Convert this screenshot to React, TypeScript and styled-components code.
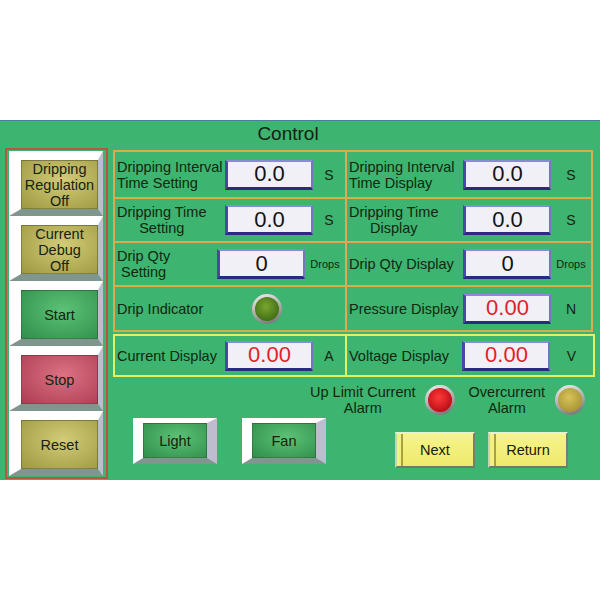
import React from 'react';
import styled, { createGlobalStyle, css } from 'styled-components';

type Tone = 'olive' | 'green' | 'red';
type LedColor = 'green' | 'red' | 'amber';

const GlobalStyle = createGlobalStyle`
  html, body {
    margin: 0;
    padding: 0;
    background: #ffffff;
  }
  body {
    font-family: 'Liberation Sans', Arial, sans-serif;
    color: #10280f;
  }
`;

const Page = styled.div`
  width: 600px;
  height: 600px;
  padding-top: 120px;
  box-sizing: border-box;
`;

const Panel = styled.div`
  width: 600px;
  height: 360px;
  background: #3db46f;
  border-top: 1px solid #4a7f9a;
  box-sizing: border-box;
  display: flex;
  flex-direction: column;
`;

const Title = styled.div`
  height: 27px;
  line-height: 25px;
  font-size: 19px;
  text-align: center;
  padding-right: 24px;
  color: #141f14;
`;

const Body = styled.div`
  display: flex;
  gap: 5px;
  padding-left: 5px;
`;

const SideColumn = styled.div`
  width: 103px;
  height: 331px;
  box-sizing: border-box;
  border: 2px solid #b8573f;
  padding: 1px 2px;
  display: flex;
  flex-direction: column;
`;

const BevelCell = styled.div<{ $small?: boolean }>`
  box-sizing: border-box;
  display: flex;
  flex-shrink: 0;
  background: #ffffff;
  border-style: solid;
  border-color: #ffffff #bdbdcf #7f968f #ffffff;
  ${({ $small }) =>
    $small
      ? css`
          width: 84px;
          height: 46px;
          border-width: 5px 10px 6px 10px;
        `
      : css`
          width: 94px;
          height: 65px;
          border-width: 9px 5px 7px 12px;
        `}
`;

const faceColors: Record<Tone, [string, string]> = {
  olive: ['#d2cc78', '#9e9842'],
  green: ['#5cc276', '#2f8e4b'],
  red: ['#dc7284', '#ad3c52'],
};

const Face = styled.div<{ $tone: Tone }>`
  flex: 1;
  box-sizing: border-box;
  border: 1px solid rgba(40, 50, 30, 0.35);
  background: radial-gradient(
    ellipse at 55% 40%,
    ${({ $tone }) => faceColors[$tone][0]} 0%,
    ${({ $tone }) => faceColors[$tone][1]} 100%
  );
  display: flex;
  align-items: center;
  justify-content: center;
  text-align: center;
  font-size: 14.5px;
  line-height: 16px;
  color: #17220f;
`;

const Main = styled.div`
  width: 482px;
  padding-top: 2px;
  display: flex;
  flex-direction: column;
`;

const FieldGrid = styled.div`
  width: 480px;
  box-sizing: border-box;
  display: grid;
  grid-template-columns: 230px 244px;
  grid-template-rows: 45px 42px 42px 43px;
  gap: 2px;
  padding: 2px;
  background: #dcab4c;
`;

const Cell = styled.div`
  background: #3db46f;
  display: flex;
  align-items: center;
  padding-left: 2px;
`;

const Label = styled.div<{ $width: number; $center?: boolean }>`
  width: ${({ $width }) => $width}px;
  flex-shrink: 0;
  font-size: 14.5px;
  line-height: 16px;
  white-space: nowrap;
  display: flex;
  justify-content: flex-start;
  span {
    display: inline-block;
    text-align: ${({ $center }) => ($center ? 'center' : 'left')};
  }
`;

const ValueBox = styled.div<{ $red?: boolean }>`
  width: 88px;
  height: 30px;
  flex-shrink: 0;
  box-sizing: border-box;
  background: #f1f0f6;
  border-style: solid;
  border-width: 2px 2px 3px 3px;
  border-color: #8a8ad6 #7676bf #2b2b7c #4848a6;
  display: flex;
  align-items: center;
  justify-content: center;
  font-size: 22px;
  color: ${({ $red }) => ($red ? '#e11f2b' : '#121212')};
`;

const Unit = styled.div<{ $small?: boolean }>`
  flex: 1;
  text-align: center;
  font-size: ${({ $small }) => ($small ? 11 : 14)}px;
  color: #15250f;
`;

const ledColors: Record<LedColor, [string, string]> = {
  green: ['#7aa52e', '#2f5f0e'],
  red: ['#ff3a3a', '#a8000c'],
  amber: ['#d8c25a', '#9c8a2a'],
};

const Led = styled.div<{ $color: LedColor; $gap?: number }>`
  width: 30px;
  height: 30px;
  flex-shrink: 0;
  margin-left: ${({ $gap }) => $gap ?? 0}px;
  border-radius: 50%;
  box-sizing: border-box;
  padding: 3px;
  background: linear-gradient(160deg, #f2f2f2 0%, #a8a8a8 55%, #6a6a6a 100%);
  &::after {
    content: '';
    display: block;
    width: 100%;
    height: 100%;
    border-radius: 50%;
    background: radial-gradient(
      circle at 45% 40%,
      ${({ $color }) => ledColors[$color][0]} 0%,
      ${({ $color }) => ledColors[$color][1]} 95%
    );
  }
`;

const YellowRow = styled.div`
  margin-top: 2px;
  width: 482px;
  height: 43px;
  box-sizing: border-box;
  border: 2px solid #e4f05c;
  display: grid;
  grid-template-columns: 230px 2px 1fr;
`;

const YellowDivider = styled.div`
  background: #e4f05c;
`;

const AlarmRow = styled.div`
  display: flex;
  align-items: center;
  height: 30px;
  margin-top: 8px;
  padding-left: 197px;
`;

const AlarmLabel = styled.div<{ $gap?: number }>`
  margin-left: ${({ $gap }) => $gap ?? 0}px;
  font-size: 14.5px;
  line-height: 16px;
  text-align: center;
  white-space: nowrap;
`;

const ActionRow = styled.div`
  display: flex;
  align-items: flex-start;
  margin-top: 3px;
  padding-left: 20px;
`;

const ToggleGroup = styled.div`
  display: flex;
  gap: 25px;
`;

const NavRow = styled.div`
  display: flex;
  gap: 13px;
  margin-top: 14px;
  margin-left: 69px;
`;

const NavButton = styled.div`
  width: 80px;
  height: 36px;
  box-sizing: border-box;
  border-style: solid;
  border-width: 2px;
  border-color: #e8f0cf #6f8374 #6c7c6a #c6d2b2;
  background: linear-gradient(180deg, #f6f48a 0%, #eeea6c 100%);
  box-shadow: inset 4px 0 0 #f3f07e, inset 6px 0 0 #a9a23c;
  display: flex;
  align-items: center;
  justify-content: center;
  font-size: 14.5px;
  color: #17200f;
`;

type Field = {
  label: string[];
  width: number;
  center?: boolean;
  value: string;
  unit: string;
  red?: boolean;
};

const fields: Field[] = [
  { label: ['Dripping Interval', 'Time Setting'], width: 108, value: '0.0', unit: 'S' },
  { label: ['Dripping Interval', 'Time Display'], width: 114, value: '0.0', unit: 'S' },
  { label: ['Dripping Time', 'Setting'], width: 108, center: true, value: '0.0', unit: 'S' },
  { label: ['Dripping Time', 'Display'], width: 114, center: true, value: '0.0', unit: 'S' },
  { label: ['Drip Qty', 'Setting'], width: 100, center: true, value: '0', unit: 'Drops' },
  { label: ['Drip Qty Display'], width: 114, value: '0', unit: 'Drops' },
];

const sideButtons: { text: string[]; tone: Tone }[] = [
  { text: ['Dripping', 'Regulation', 'Off'], tone: 'olive' },
  { text: ['Current', 'Debug', 'Off'], tone: 'olive' },
  { text: ['Start'], tone: 'green' },
  { text: ['Stop'], tone: 'red' },
  { text: ['Reset'], tone: 'olive' },
];

const Lines = ({ lines }: { lines: string[] }) => (
  <span>
    {lines.map((l, i) => (
      <React.Fragment key={i}>
        {i > 0 && <br />}
        {l}
      </React.Fragment>
    ))}
  </span>
);

const FieldCell = ({ f }: { f: Field }) => (
  <Cell>
    <Label $width={f.width} $center={f.center}>
      <Lines lines={f.label} />
    </Label>
    <ValueBox $red={f.red}>{f.value}</ValueBox>
    <Unit $small={f.unit === 'Drops'}>{f.unit}</Unit>
  </Cell>
);

export default function App() {
  return (
    <Page>
      <GlobalStyle />
      <Panel>
        <Title>Control</Title>
        <Body>
          <SideColumn>
            {sideButtons.map((b) => (
              <BevelCell key={b.text.join(' ')}>
                <Face $tone={b.tone}>
                  <Lines lines={b.text} />
                </Face>
              </BevelCell>
            ))}
          </SideColumn>

          <Main>
            <FieldGrid>
              {fields.map((f) => (
                <FieldCell key={f.label.join(' ')} f={f} />
              ))}
              <Cell>
                <Label $width={135}>
                  <span>Drip Indicator</span>
                </Label>
                <Led $color="green" />
              </Cell>
              <FieldCell f={{ label: ['Pressure Display'], width: 114, value: '0.00', unit: 'N', red: true }} />
            </FieldGrid>

            <YellowRow>
              <Cell>
                <Label $width={108}>
                  <span>Current Display</span>
                </Label>
                <ValueBox $red>0.00</ValueBox>
                <Unit>A</Unit>
              </Cell>
              <YellowDivider />
              <Cell>
                <Label $width={113}>
                  <span>Voltage Display</span>
                </Label>
                <ValueBox $red>0.00</ValueBox>
                <Unit>V</Unit>
              </Cell>
            </YellowRow>

            <AlarmRow>
              <AlarmLabel>
                Up Limit Current
                <br />
                Alarm
              </AlarmLabel>
              <Led $color="red" $gap={9} />
              <AlarmLabel $gap={14}>
                Overcurrent
                <br />
                Alarm
              </AlarmLabel>
              <Led $color="amber" $gap={10} />
            </AlarmRow>

            <ActionRow>
              <ToggleGroup>
                <BevelCell $small>
                  <Face $tone="green">Light</Face>
                </BevelCell>
                <BevelCell $small>
                  <Face $tone="green">Fan</Face>
                </BevelCell>
              </ToggleGroup>
              <NavRow>
                <NavButton>Next</NavButton>
                <NavButton>Return</NavButton>
              </NavRow>
            </ActionRow>
          </Main>
        </Body>
      </Panel>
    </Page>
  );
}
